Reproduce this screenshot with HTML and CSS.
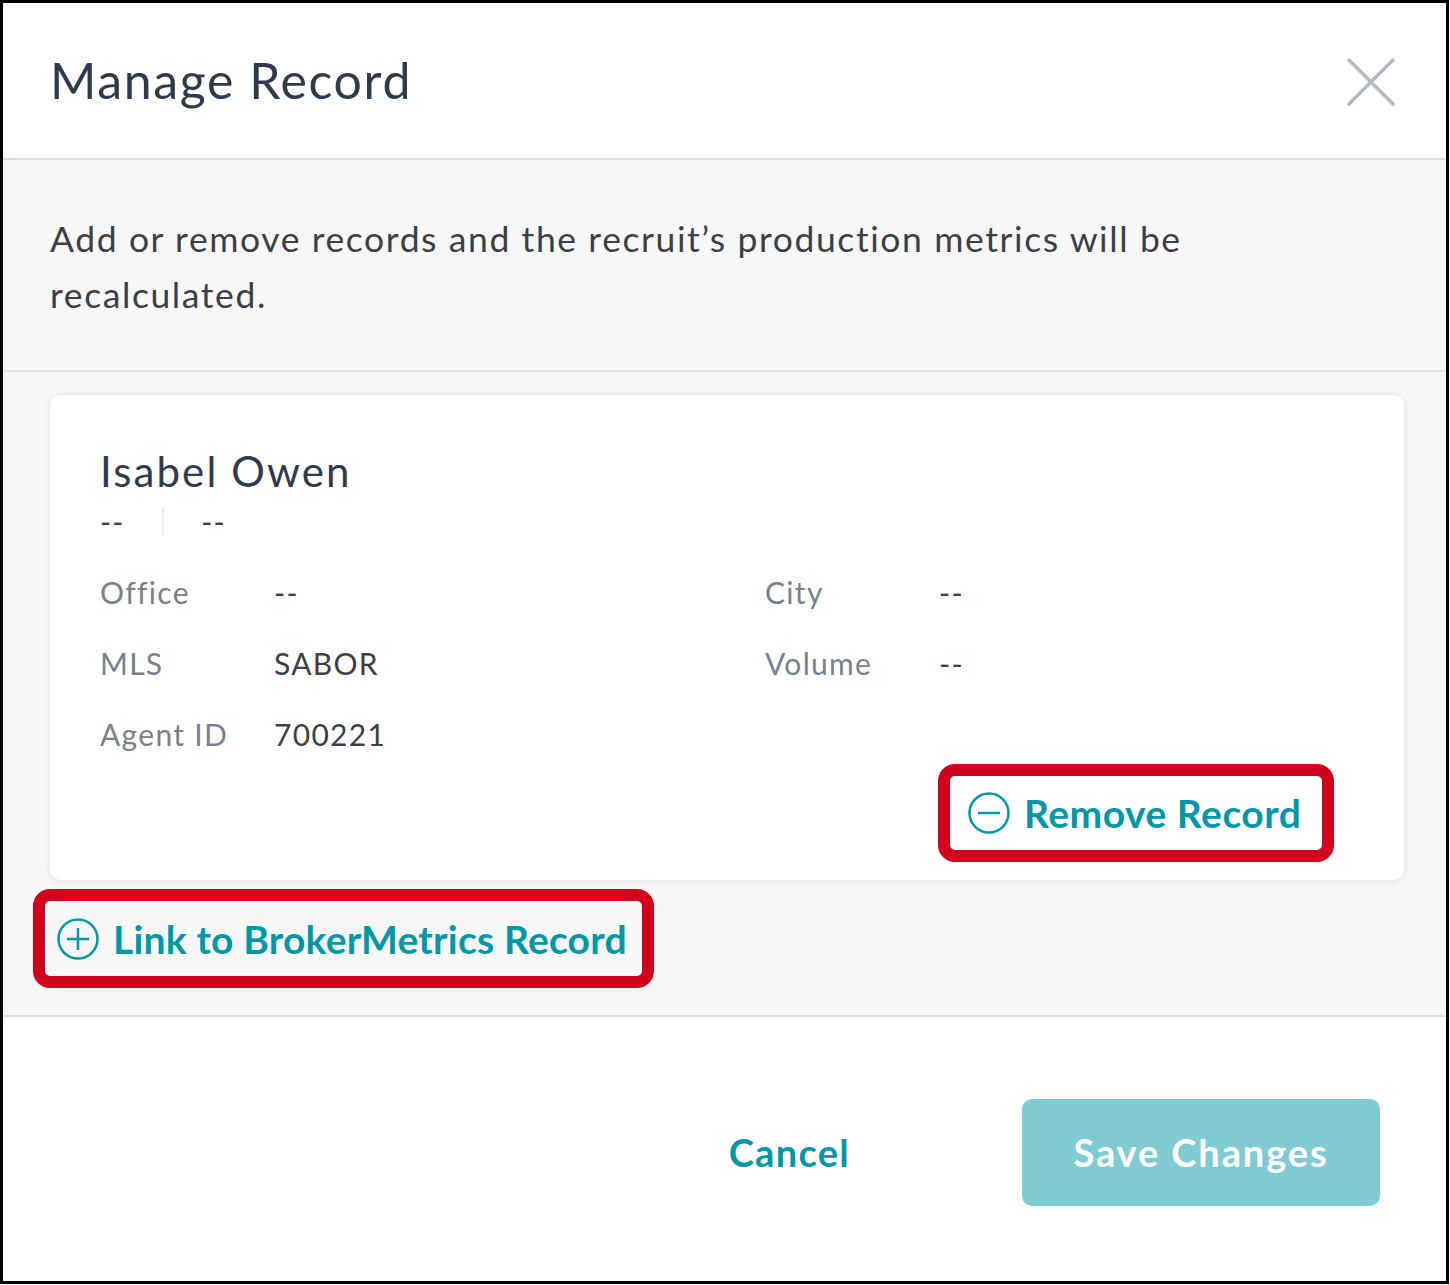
FILE: index.html
```html
<!DOCTYPE html>
<html>
<head>
<meta charset="utf-8">
<link rel="stylesheet" href="styles.css">
</head>
<body>
<div class="frame">
  <header class="header">
    <h1 class="title">Manage Record</h1>
    <button class="close" aria-label="Close">
      <svg width="50" height="50" viewBox="0 0 50 50"><path d="M3 3 L47 47 M47 3 L3 47" stroke="#b4b9bf" stroke-width="3.5" stroke-linecap="round" fill="none"/></svg>
    </button>
  </header>
  <section class="desc">
    <p>Add or remove records and the recruit’s production metrics will be recalculated.</p>
  </section>
  <section class="body">
    <div class="card">
      <h2 class="name">Isabel Owen</h2>
      <div class="sub"><span>--</span><span class="sep"></span><span>--</span></div>
      <div class="fields">
        <div class="col">
          <div class="row"><span class="label">Office</span><span class="value">--</span></div>
          <div class="row"><span class="label">MLS</span><span class="value">SABOR</span></div>
          <div class="row"><span class="label">Agent ID</span><span class="value">700221</span></div>
        </div>
        <div class="col">
          <div class="row"><span class="label">City</span><span class="value">--</span></div>
          <div class="row"><span class="label">Volume</span><span class="value">--</span></div>
        </div>
      </div>
      <div class="card-actions">
        <div class="hl hl-remove">
          <button class="link">
            <svg width="44" height="44" viewBox="0 0 44 44"><circle cx="22" cy="22" r="19.5" stroke="#0097a7" stroke-width="2.5" fill="none"/><path d="M11 22 H33" stroke="#0097a7" stroke-width="2.5"/></svg>
            <span>Remove Record</span>
          </button>
        </div>
      </div>
    </div>
    <div class="hl hl-link">
      <button class="link">
        <svg width="44" height="44" viewBox="0 0 44 44"><circle cx="22" cy="22" r="19.5" stroke="#0097a7" stroke-width="2.5" fill="none"/><path d="M11 22 H33 M22 11 V33" stroke="#0097a7" stroke-width="2.5"/></svg>
        <span>Link to BrokerMetrics Record</span>
      </button>
    </div>
  </section>
  <footer class="footer">
    <button class="cancel">Cancel</button>
    <button class="save">Save Changes</button>
  </footer>
</div>
</body>
</html>
```
FILE: styles.css
```css
* { box-sizing: border-box; }
html, body { margin: 0; padding: 0; background: #fff; }
body { font-family: "Lato", "Noto Sans", sans-serif; color: #2f3a4c; }
button { font-family: inherit; background: none; border: none; padding: 0; cursor: pointer; }

.frame {
  width: 1449px;
  height: 1284px;
  border: 3px solid #000;
  display: flex;
  flex-direction: column;
  overflow: hidden;
}

.header {
  height: 157px;
  flex: none;
  display: flex;
  align-items: center;
  justify-content: space-between;
  padding: 0 50px 0 47px;
  border-bottom: 2px solid #d7dce0;
}
.title {
  margin: 0;
  font-size: 50px;
  font-weight: 400;
  color: #2f3a4c;
  letter-spacing: 1.6px;
  padding-bottom: 2px;
}
.close { width: 50px; height: 50px; display: flex; margin-top: 2px; }

.desc {
  flex: none;
  background: #f7f7f7;
  padding: 51px 47px 47px;
  border-bottom: 2px solid #e4e6e8;
}
.desc p {
  margin: 0;
  font-size: 35.5px;
  line-height: 56px;
  color: #3c3f44;
  letter-spacing: 1.6px;
  max-width: 1200px;
}

.body {
  flex: none;
  background: #f7f7f7;
  padding: 23px 42px 27px 47px;
  border-bottom: 2px solid #dcdfe2;
}
.card {
  background: #fff;
  border-radius: 10px;
  box-shadow: 0 1px 6px rgba(0,0,0,0.10);
  padding: 51px 70px 18px 50px;
  height: 485px;
  display: flex;
  flex-direction: column;
}
.name {
  margin: 0;
  font-size: 42px;
  font-weight: 400;
  line-height: 50px;
  letter-spacing: 2.1px;
  color: #2f3a4c;
}
.sub {
  display: flex;
  align-items: center;
  height: 34px;
  margin-top: 8px;
  font-size: 30px;
  letter-spacing: 1px;
  color: #3c3f44;
}
.sub .sep {
  width: 2px;
  height: 28px;
  background: #eceef0;
  margin: 0 37px 0 38px;
}
.fields {
  display: grid;
  grid-template-columns: 665px 1fr;
  margin-top: 18px;
}
.col { display: flex; flex-direction: column; }
.row {
  display: flex;
  height: 71px;
  align-items: center;
  font-size: 30px;
  letter-spacing: 1.3px;
}
.label { width: 174px; color: #7a8089; flex: none; }
.value { color: #3c3f44; }

.card-actions {
  display: flex;
  justify-content: flex-end;
  margin-top: -5px;
}
.hl {
  border: 12px solid #d0021e;
  border-radius: 17px;
  display: inline-flex;
  align-items: center;
  flex: none;
}
.hl-remove {
  height: 98px;
  width: 396px;
  padding-left: 17px;
  background: #fff;
}
.hl-link {
  height: 99px;
  width: 621px;
  margin-top: 9px;
  margin-left: -17px;
  padding-left: 11px;
}
.link {
  display: flex;
  align-items: center;
  gap: 13px;
  color: #0097a7;
  font-size: 39px;
  font-weight: 700;
  letter-spacing: 0.2px;
}
.hl-remove .link { letter-spacing: 0.5px; }
.link svg { flex: none; }

.footer {
  flex: 1;
  display: flex;
  align-items: center;
  justify-content: flex-end;
  padding: 6px 66px 0 0;
}
.cancel {
  color: #0097a7;
  font-size: 38px;
  font-weight: 700;
  letter-spacing: 1.3px;
  margin-right: 172px;
}
.save {
  width: 358px;
  height: 107px;
  border-radius: 10px;
  background: #80cbd2;
  color: #fff;
  font-size: 38px;
  font-weight: 700;
  letter-spacing: 1.9px;
}
```
